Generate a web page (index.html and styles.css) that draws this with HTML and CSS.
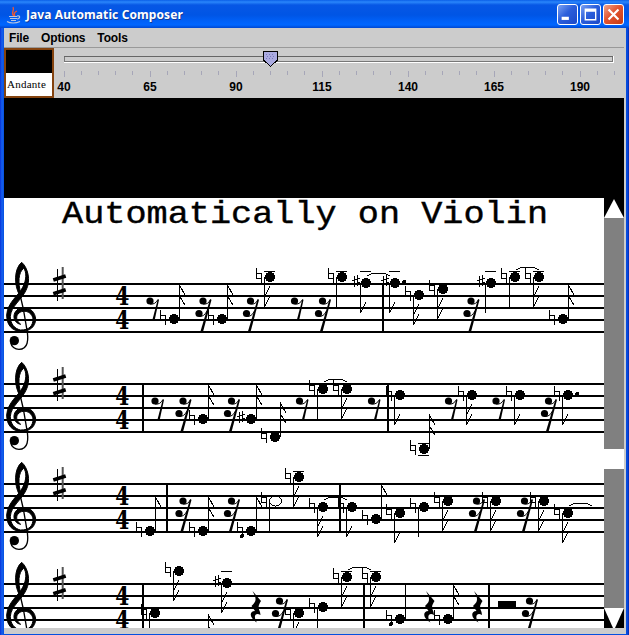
FILE: index.html
```html
<!DOCTYPE html>
<html lang="en">
<head>
<meta charset="utf-8">
<title>Java Automatic Composer</title>
<link rel="stylesheet" href="styles.css">
</head>
<body>
<div class="window">
  <header class="titlebar">
    <svg class="cup" width="16" height="18" viewBox="0 0 16 18">
      <path class="steam" d="M8 10C4 7 9 5 7 1M9 10C7 8 9 6 11 5"/>
      <path class="saucer" d="M3 10.5h8M4 12.5h7M5 14.5h5M1 15.5c3 2 9 2 13 0M11 10c4-1 3 3 0 3"/>
    </svg>
    <span class="caption">Java Automatic Composer</span>
    <div class="controls">
      <svg class="btn" width="21" height="21" viewBox="0 0 21 21"><rect x="4" y="13" width="8" height="3.500"/></svg>
      <svg class="btn" width="21" height="21" viewBox="0 0 21 21"><path d="M4 4h13v13H4zM5.500 7.500v8h10v-8z" fill-rule="evenodd"/></svg>
      <svg class="btn close" width="21" height="21" viewBox="0 0 21 21"><path class="cross" d="M5 5l11 11M16 5l-11 11"/></svg>
    </div>
  </header>
  <div class="frame">
    <nav class="menu"><span>File</span><span>Options</span><span>Tools</span></nav>
    <section class="tempo">
      <div class="badge"><span>Andante</span></div>
      <svg class="slider" width="570" height="50" viewBox="54 48 570 50">
        <path class="hi" d="M64 62.500H614M613.500 56V63"/>
        <rect class="track" x="64.500" y="56.500" width="548" height="5"/>
        <path class="dark" d="M64 56.500H613"/>
        <g id="ticks"></g>
        <path class="thumb" d="M263.500 51.500H277.500V60L270.500 66.500L263.500 60Z"/>
        <path class="grip" d="M266 54.500h9M267 56.500h9M266 58.500h9"/>
      </svg>
    </section>
    <div class="band"></div>
    <main class="score">
      <svg class="sheet" width="600" height="430" viewBox="4 198 600 430">
        <defs>
          <g id="clef" class="smooth" transform="scale(.33333)">
            <path class="clefbody" d="M58 134C42 105 42 56 65 37C83 52 94 91 78 121C65 149 33 169 31 199C31 222 44 236 61 240C89 241 99 226 99 207C98 193 84 182 70 184C56 185 47 197 51 209C53 214 57 219 62 223C49 221 41 210 42 198C43 184 54 173 70 173C91 172 106 187 107 208C106 230 90 245 62 244C36 243 20 225 20 195C23 156 56 137 68 112C80 90 80 65 71 55C55 67 53 98 63 132Z"/>
            <path class="clefstem" d="M58 125L70 177L80 235C87 270 84 298 57 298C45 298 34 290 32 278"/>
            <circle cx="43" cy="272" r="14"/>
          </g>
          <g id="keysharp" class="smooth">
            <path class="w1" d="M57.500 369V401"/><path class="grey" d="M62.700 367V399"/>
            <path class="w3" d="M53.300 380L65.700 376M53.300 393.700L65.700 389.700"/>
          </g>
          <path id="head" d="M-2-5H2V-4H4V-2H5V2H4V4H2V5H-2V4H-4V2H-5V-2H-4V-4H-2Z"/>
          <path id="natural" class="w1" d="M-13.500-9V2M-13.500-3.500H-8.500M-13.500 1.500H-8.500M-8.500-4V6"/>
          <path id="sharp" class="w1" d="M-11.500-7V4M-8.500-8V3M-14-2.500L-6-4.500M-14 1.500L-6-.500"/>
          <g id="rest8" class="smooth">
            <circle cx="0" cy="17" r="3.600"/>
            <path class="w1" d="M0 20Q5 21 8 15.500"/>
            <path d="M7.800 15.300L9 15.800L4.800 35.500H2.500Z"/>
          </g>
          <g id="rest16" class="smooth">
            <circle cx="0" cy="17" r="3.600"/><circle cx="-4" cy="29.500" r="3.600"/>
            <path class="w1" d="M0 20Q5 21 7.500 15.500M-4 32.500Q1 33 4 27"/>
            <path d="M7 15.300L8.500 15.800L0 48H-2.700Z"/>
          </g>
          <g id="rest4" class="smooth">
            <path d="M-3.500 7L5 17C2 22 2 23 4 28L4.500 31C-1 28-3 33 1 38.500C-7 34-7 27-1 27L-4.500 22C0 18 0 16-1 12Z"/>
          </g>
        </defs>
        <text class="heading" transform="translate(62 223) scale(1.118 1)">Automatically on Violin</text>
        <g id="music"></g>
      </svg>
      <aside class="scrollbar">
        <svg width="20" height="20" viewBox="0 0 20 20"><path d="M10 1L20 20H0Z"/></svg>
        <div class="gutter"><div class="knob"></div></div>
        <svg width="20" height="20" viewBox="0 0 20 20"><path d="M0 0H20L11 20H9Z"/></svg>
      </aside>
    </main>
  </div>
</div>
<script src="score.js"></script>
</body>
</html>
```
FILE: styles.css
```css
body { margin: 0; overflow: hidden; }
.window { width: 629px; height: 635px; box-sizing: border-box; display: flex; flex-direction: column; background: linear-gradient(90deg, #0831d9 0, #1660ee 2px, #0550e0 4px, #0550e0 calc(100% - 3px), #0843d8 calc(100% - 1px), #001ea0 100%); font-family: "Liberation Sans", sans-serif; }
.titlebar { height: 28px; display: flex; align-items: center; box-sizing: border-box; padding: 1px 5px 0 6px; background: linear-gradient(#0b5fe8 0, #2a86fb 2px, #0757e5 5px, #0055e5 15px, #0062fa 22px, #0066ff 25px, #0047d0 28px); }
.caption { margin-left: 4px; flex: 1; color: #fff; font: bold 12px "Noto Sans", sans-serif; white-space: nowrap; letter-spacing: .1px; text-shadow: 1px 1px #123d9a; }
.steam { fill: none; stroke: #f05a30; stroke-width: 1.3; }
.saucer { fill: none; stroke: #b9c6e0; stroke-width: 1.2; }
.controls { display: flex; gap: 2px; }
.btn { box-sizing: border-box; border: 1px solid #fff; border-radius: 3px; background: linear-gradient(135deg, #7ba2f4, #2b5edb 45%, #1b49c8); fill: #fff; }
.btn.close { background: linear-gradient(135deg, #f0a58c, #e25430 45%, #c73a12); }
.cross { stroke: #fff; stroke-width: 2.4; }
.frame { flex: 1; margin: 0 3px 1px 4px; padding: 0 2px 6px 0; background: #ccc; display: flex; flex-direction: column; min-height: 0; }
.menu { height: 19px; display: flex; gap: 12px; padding-left: 5px; border-bottom: 1px solid #999; font: bold 12px/21px "Liberation Sans", sans-serif; letter-spacing: -.15px; flex: none; }
.tempo { height: 50px; display: flex; flex: none; }
.badge { width: 50px; height: 50px; box-sizing: border-box; border: 2px solid #84430f; background: linear-gradient(#000 23px, #fff 23px); display: flex; align-items: flex-end; font: 11px/24px "Liberation Serif", serif; letter-spacing: .25px; padding-left: 1px; }
.slider { display: block; shape-rendering: crispEdges; }
.track { fill: #ccc; stroke: #777; }
.dark { stroke: #666; }
.hi { stroke: #fff; fill: none; }
.tick { stroke: #a6a6b8; }
.label { font: bold 12px "Liberation Sans", sans-serif; text-anchor: middle; }
.thumb { fill: #aaaae0; stroke: #000; }
.grip { stroke: #7777bb; stroke-dasharray: 1 2; }
.band { height: 100px; background: #000; flex: none; }
.score { display: flex; height: 430px; }
.sheet { background: #fff; display: block; shape-rendering: crispEdges; }
.smooth { shape-rendering: geometricPrecision; }
.heading { font: 31.500px "Liberation Mono", monospace; stroke: #000; stroke-width: .4; }
.meter { font: bold 26px "DejaVu Serif", serif; }
.w1 { fill: none; stroke: #000; stroke-width: 1; }
.w2 { fill: none; stroke: #000; stroke-width: 2; }
.w3 { fill: none; stroke: #000; stroke-width: 3.600; }
.grey { stroke: #555; stroke-width: 2; }
.clefbody { stroke: #000; stroke-width: 3; stroke-linejoin: round; }
.clefstem { fill: none; stroke: #000; stroke-width: 4; }
.hollow { fill: #fff; stroke: #000; }
.scrollbar { width: 20px; display: flex; flex-direction: column; background: #000; fill: #fff; }
.scrollbar svg { display: block; flex: none; }
.gutter { flex: 1; background: #808080; padding-top: 231px; }
.knob { height: 20px; background: #fff; }
```
FILE: score.js
```js
// Tempo scale: one tick per 5 bpm, a label on every fifth.
let scale = '';
for (let k = 0; k <= 32; k++) {
  const x = Math.floor(64 + k * 17.2) + 0.5;
  scale += `<path class="tick" d="M${x} 71V${k % 5 ? 75 : 77}"/>`;
  if (k % 5 === 0) scale += `<text class="label" x="${x - 0.5}" y="91">${40 + k * 5}</text>`;
}
document.getElementById('ticks').innerHTML = scale;

// Note: [x, y, accidental, stem direction, flags, ledger line positions]
// y is measured from the top staff line.
const staves = [
  { bars: [383], rest8: [150, 294.5], rest16: [203, 250.5, 322.5, 471],
    notes: [[174,35,'n','u',2],[222,35,'n','u',2],[270,-7,'n','d',2,[-13]],[342,-7,'n','d',0,[-13]],
      [366,-1,'s','d',1,[-13]],[395,-1,'s','d',1,[-13]],[419,11,'n','d',2],[443,5,'n','d',2],
      [491,-1,'s','d',0,[-13]],[515,-7,'n','d',0,[-13]],[539,-7,'n','d',2,[-13]],[563,35,'n','u',2]],
    ties: [[367,-8],[516,-14]], dots: [[404,-2]] },
  { bars: [143, 388], rest8: [155, 299.5, 371.5, 448.5, 496], rest16: [183, 231.5, 548.5],
    notes: [[203,35,'n','u',2],[251,35,'s','u',2],[275,53,'n','u',2],[323,5,'n','d',0],[347,5,'n','d',2],
      [400,11,'n','d',1],[424,65,'n','u',2,[59,71]],[472,11,'n','d',2],[520,11,'n','d',1],[568,11,'n','d',1]],
    ties: [[324,-2]], dots: [[577,10]] },
  { bars: [167, 340], rest16: [183, 231.5, 476.5, 524.5],
    notes: [[150,47,'n','u',1],[203,47,'n','u',2],[251,47,'n','u',1],[275,17,'n','d',0,[],true],
      [299,-7,'n','d',2,[-13]],[323,23,'n','d',2],[352,23,'n','d',1],[376,35,'n','u',1],[400,29,'n','d',1],
      [424,23,'n','d',0],[448,17,'n','d',2],[496,17,'n','d',2],[544,17,'n','d',2],[568,29,'n','d',2]],
    ties: [[324,16],[569,22]], dots: [[242,52]] },
  { bars: [143, 364, 489], rest16: [279.5, 529.5], rest4: [256, 429.5, 477.5], block: 498,
    notes: [[155,29,'n','d',0],[179,-13,'n','d',2],[203,65,'n','u',2],[227,-1,'s','d',2,[-13]],
      [299,29,'n','d',2],[323,23,'n','d',0],[347,-7,'n','d',2,[-13]],[376,-7,'n','d',2,[-13]],
      [400,35,'n','u',0],[448,35,'n','u',2]],
    ties: [[348,-14]], dots: [[391,40]] }
];

const use = (id, x, y) => `<use href="#${id}" transform="translate(${x} ${y})"/>`;

function note([x, y, accidental, dir, flags, ledgers = [], hollow]) {
  let d = dir === 'u' ? `M${x + 5.5} ${y - 35}V${y}` : `M${x - 5.5} ${y}V${y + 30}`;
  if (dir === 'u') {
    if (flags > 0) d += `M${x + 5.5} ${y - 34}l5.5 10`;
    if (flags > 1) d += `M${x + 5.5} ${y - 23}l5.5 9`;
  } else {
    if (flags > 0) d += `M${x - 5.5} ${y + 29.5}l5.5-10`;
    if (flags > 1) d += `M${x - 5.5} ${y + 19.5}l5.5-10`;
  }
  for (const l of ledgers) d += `M${x - 6} ${l + 0.5}h11`;
  return `<path class="w1" d="${d}"/>` + use(accidental === 's' ? 'sharp' : 'natural', x, y) +
    (hollow ? `<ellipse class="hollow" cx="${x + 0.5}" cy="${y}" rx="6" ry="5"/>` : use('head', x, y));
}

document.getElementById('music').innerHTML = staves.map((s, i) => {
  let g = '';
  for (let n = 0; n < 5; n++) g += `<path class="w2" d="M4 ${n * 12}H604"/>`;
  for (const b of s.bars) g += `<path class="w2" d="M${b} 0V48"/>`;
  g += use('clef', 0, -34) + use('keysharp', 0, -384);
  g += `<text class="meter" transform="translate(115.300 20.500) scale(.78 1)">4</text>`;
  g += `<text class="meter" transform="translate(115.300 44.500) scale(.78 1)">4</text>`;
  for (const kind of ['rest8', 'rest16', 'rest4']) for (const x of s[kind] || []) g += use(kind, x, 0);
  if (s.block) g += `<rect x="${s.block}" y="17" width="18" height="7"/>`;
  g += s.notes.map(note).join('');
  for (const [x, y] of s.ties) g += `<path class="w1" d="M${x} ${y}C${x + 6} ${y - 4} ${x + 17} ${y - 4} ${x + 23} ${y}"/>`;
  for (const [x, y] of s.dots) g += `<circle cx="${x}" cy="${y}" r="2"/>`;
  return `<g transform="translate(0 ${284 + i * 100})">${g}</g>`;
}).join('');
```
